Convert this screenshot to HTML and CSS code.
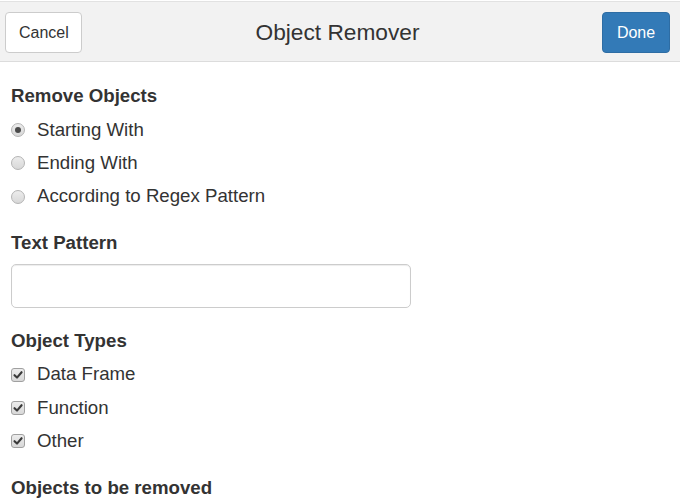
FILE: index.html
```html
<!DOCTYPE html>
<html>
<head>
<meta charset="utf-8">
<link rel="stylesheet" href="styles.css">
</head>
<body>
<div class="page">
  <header class="bar">
    <button class="btn btn-default">Cancel</button>
    <div class="title">Object Remover</div>
    <button class="btn btn-primary">Done</button>
  </header>
  <main class="content">
    <section class="group">
      <div class="group-label">Remove Objects</div>
      <div class="options">
        <label class="opt"><span class="radio checked"></span>Starting With</label>
        <label class="opt"><span class="radio"></span>Ending With</label>
        <label class="opt"><span class="radio"></span>According to Regex Pattern</label>
      </div>
    </section>
    <section class="group">
      <div class="group-label">Text Pattern</div>
      <input class="text-input" type="text">
    </section>
    <section class="group">
      <div class="group-label">Object Types</div>
      <div class="options">
        <label class="opt"><span class="check"><svg width="12" height="12" viewBox="0 0 12 12"><path d="M2.5 6.2 L5 8.6 L9.6 3.2" fill="none" stroke="#3a3a3a" stroke-width="2.1" stroke-linecap="round" stroke-linejoin="round"/></svg></span>Data Frame</label>
        <label class="opt"><span class="check"><svg width="12" height="12" viewBox="0 0 12 12"><path d="M2.5 6.2 L5 8.6 L9.6 3.2" fill="none" stroke="#3a3a3a" stroke-width="2.1" stroke-linecap="round" stroke-linejoin="round"/></svg></span>Function</label>
        <label class="opt"><span class="check"><svg width="12" height="12" viewBox="0 0 12 12"><path d="M2.5 6.2 L5 8.6 L9.6 3.2" fill="none" stroke="#3a3a3a" stroke-width="2.1" stroke-linecap="round" stroke-linejoin="round"/></svg></span>Other</label>
      </div>
    </section>
    <section class="group">
      <div class="group-label">Objects to be removed</div>
    </section>
  </main>
</div>
</body>
</html>
```
FILE: styles.css
```css
* { box-sizing: border-box; }
html, body {
  margin: 0;
  padding: 0;
  background: #fff;
  font-family: "Liberation Sans", Arial, sans-serif;
  color: #333;
}
.page {
  width: 680px;
  height: 500px;
  overflow: hidden;
  padding-top: 1px;
}
.bar {
  display: grid;
  grid-template-columns: 1fr auto 1fr;
  align-items: start;
  height: 61px;
  padding: 10px 10px 0 5px;
  background: #f2f2f2;
  border-top: 1px solid #e2e2e2;
  border-bottom: 1px solid #dcdcdc;
}
.btn {
  height: 41px;
  font-family: inherit;
  font-size: 16px;
  border-radius: 4px;
  border: 1px solid #ccc;
  padding: 0 13px;
  line-height: 39px;
}
.btn-default {
  justify-self: start;
  background: #fff;
  color: #333;
  width: 77px;
}
.btn-primary {
  justify-self: end;
  background: #337ab7;
  border-color: #2e6da4;
  color: #fff;
  width: 68px;
}
.title {
  font-size: 22.7px;
  line-height: 41px;
  color: #333;
}
.content {
  padding: 21px 11px 0 11px;
  display: flex;
  flex-direction: column;
  gap: 20px;
}
.group {
  display: flex;
  flex-direction: column;
  gap: 7px;
}
.group-label {
  font-weight: bold;
  font-size: 18.67px;
  line-height: 26.67px;
  color: #333;
}
.options {
  display: flex;
  flex-direction: column;
  gap: 6.67px;
}
.opt {
  display: flex;
  align-items: center;
  font-size: 18.67px;
  line-height: 26.67px;
  color: #333;
}
.radio {
  position: relative;
  width: 14px;
  height: 14px;
  border-radius: 50%;
  border: 1px solid #b4b4b4;
  background: linear-gradient(#ececec, #d8d8d8);
  margin-right: 12px;
  flex: none;
}
.radio.checked::after {
  content: "";
  position: absolute;
  left: 3px;
  top: 3px;
  width: 6px;
  height: 6px;
  border-radius: 50%;
  background: #4a4a4a;
}
.check {
  display: flex;
  align-items: center;
  justify-content: center;
  width: 14px;
  height: 14px;
  border-radius: 3px;
  border: 1px solid #a0a0a0;
  background: linear-gradient(#ececec, #d8d8d8);
  margin-right: 12px;
  flex: none;
}
.text-input {
  width: 400px;
  height: 44px;
  border: 1px solid #ccc;
  border-radius: 5px;
  box-shadow: inset 0 1px 1px rgba(0,0,0,0.075);
  background: #fff;
  margin: 0;
}
```
